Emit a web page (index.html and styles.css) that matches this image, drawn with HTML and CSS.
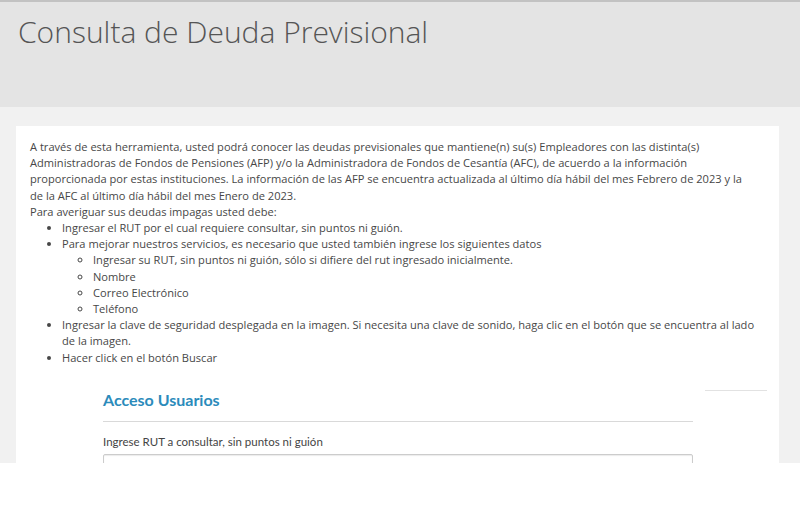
FILE: index.html
```html
<!DOCTYPE html>
<html lang="es">
<head>
<meta charset="utf-8">
<title>Consulta de Deuda Previsional</title>
<link rel="stylesheet" href="styles.css">
</head>
<body>
<div class="viewport">
  <header class="page-header">
    <h1 class="page-title">Consulta de Deuda Previsional</h1>
  </header>
  <main class="content-area">
    <section class="card">
      <p class="intro">A través de esta herramienta, usted podrá conocer las deudas previsionales que mantiene(n) su(s) Empleadores con las distinta(s) Administradoras de Fondos de Pensiones (AFP) y/o la Administradora de Fondos de Cesantía (AFC), de acuerdo a la información proporcionada por estas instituciones. La información de las AFP se encuentra actualizada al último día hábil del mes Febrero de 2023 y la de la AFC al último día hábil del mes Enero de 2023.</p>
      <p class="intro">Para averiguar sus deudas impagas usted debe:</p>
      <ul class="steps">
        <li>Ingresar el RUT por el cual requiere consultar, sin puntos ni guión.</li>
        <li>Para mejorar nuestros servicios, es necesario que usted también ingrese los siguientes datos
          <ul class="substeps">
            <li>Ingresar su RUT, sin puntos ni guión, sólo si difiere del rut ingresado inicialmente.</li>
            <li>Nombre</li>
            <li>Correo Electrónico</li>
            <li>Teléfono</li>
          </ul>
        </li>
        <li>Ingresar la clave de seguridad desplegada en la imagen. Si necesita una clave de sonido, haga clic en el botón que se encuentra al lado de la imagen.</li>
        <li>Hacer click en el botón Buscar</li>
      </ul>
      <div class="access-row">
        <div class="access-form">
          <h2 class="access-title">Acceso Usuarios</h2>
          <label class="field-label" for="rut">Ingrese RUT a consultar, sin puntos ni guión</label>
          <input class="field-input" id="rut" type="text">
        </div>
        <div class="access-aside"></div>
      </div>
    </section>
  </main>
</div>
</body>
</html>
```

FILE: styles.css
```css
html, body {
  margin: 0;
  padding: 0;
  background: #ffffff;
}
body {
  font-family: "Open Sans", "DejaVu Sans", sans-serif;
  color: #474747;
}
.viewport {
  height: 463px;
  overflow: hidden;
  background: #f1f1f1;
}
.page-header {
  height: 105px;
  background: #e4e4e4;
  border-top: 2px solid #c2c2c2;
  padding: 0 18px;
}
.page-title {
  margin: 0;
  padding-top: 11px;
  font-weight: 300;
  font-size: 30px;
  line-height: 38px;
  color: #555555;
}
.content-area {
  padding: 19px 21px 0 16px;
}
.card {
  background: #ffffff;
  padding: 13px 22px 40px 14px;
  min-height: 400px;
}
.intro {
  margin: 0;
  font-size: 11.1px;
  line-height: 16.2px;
}
.steps {
  margin: 0;
  padding-left: 32px;
  font-size: 11.1px;
  line-height: 16.2px;
}
.substeps {
  margin: 0;
  padding-left: 31px;
  list-style-type: circle;
}
.access-row {
  display: flex;
  margin-left: 73px;
  margin-top: 24px;
}
.access-form {
  width: 590px;
}
.access-aside {
  width: 62px;
  margin-left: 12px;
  margin-right: -22px;
  border-top: 1px solid #e2e2e2;
}
.access-title {
  margin: 0;
  font-family: Lato, "Open Sans", sans-serif;
  font-weight: 700;
  font-size: 16px;
  line-height: 20px;
  color: #2b8bbb;
  padding-bottom: 11px;
  border-bottom: 1px solid #d9d9d9;
}
.field-label {
  display: block;
  margin-top: 12px;
  font-family: Lato, "Open Sans", sans-serif;
  font-size: 11.5px;
  line-height: 16px;
  color: #444444;
}
.field-input {
  display: block;
  box-sizing: border-box;
  width: 100%;
  height: 30px;
  margin-top: 4px;
  border: 1px solid #cccccc;
  border-radius: 2px;
  box-shadow: inset 0 1px 1px rgba(0,0,0,0.08);
}
```
